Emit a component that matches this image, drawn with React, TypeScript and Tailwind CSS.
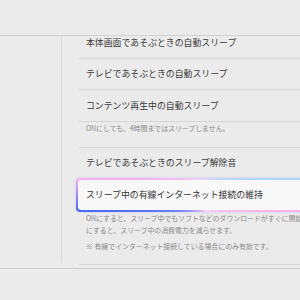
export default function App() {
  return (
    <div className="flex h-[300px] w-[300px] flex-col overflow-hidden bg-[#ebebeb] font-['Noto_Sans_CJK_JP','Noto_Sans',sans-serif] text-[#3a3a3a]">
      <header className="h-[36px] shrink-0 border-b border-[#d2d2d2]" />
      <div className="flex h-[232px] shrink-0">
        <aside className="mb-[5px] w-[62px] shrink-0 border-r border-[#dadada]" />
        <main className="flex-1 overflow-hidden pl-[17px]">
          <div className="w-[260px]">
            <div className="-mt-[9px] flex h-[32px] items-center border-b border-[#d6d6d6] pl-[7px] text-[8.9px]">
              本体画面であそぶときの自動スリープ
            </div>
            <div className="flex h-[31px] items-center border-b border-[#d6d6d6] pl-[7px] text-[8.9px]">
              テレビであそぶときの自動スリープ
            </div>
            <div className="flex h-[32px] items-center border-b border-[#d6d6d6] pl-[7px] text-[8.9px]">
              コンテンツ再生中の自動スリープ
            </div>
            <div className="h-[26px] border-b border-[#d6d6d6] pl-[7px] pt-[1px] text-[6.9px] leading-[10px] text-[#8a8a8a]">
              ONにしても、4時間まではスリープしません。
            </div>
            <div className="flex h-[30px] items-center pl-[7px] text-[8.9px]">
              テレビであそぶときのスリープ解除音
            </div>
            <div className="-ml-[3px] h-[34px] w-[260px] rounded-[4px] bg-[conic-gradient(from_0deg,#dcd6ff_0deg,#a9d6ff_83deg,#f3b2ee_97deg,#f6d2f2_180deg,#4a68f2_263deg,#f2aef0_277deg,#f2cdf4_320deg,#dcd6ff_360deg)] p-[2px] shadow-[0_0_3px_rgba(160,150,255,0.35)]">
              <div className="flex h-full items-center rounded-[3px] bg-[#f8f8f8] pl-[8px] text-[8.9px] text-[#333]">
                スリープ中の有線インターネット接続の維持
              </div>
            </div>
            <div className="whitespace-nowrap border-b border-[#d6d6d6] pb-[12px] pl-[7px] text-[6.9px] leading-[12px] text-[#8a8a8a]">
              <p>ONにすると、スリープ中でもソフトなどのダウンロードがすぐに開始されます。OFF</p>
              <p>にすると、スリープ中の消費電力を減らせます。</p>
              <p className="mt-[4px]">※ 有線でインターネット接続している場合にのみ有効です。</p>
            </div>
          </div>
        </main>
      </div>
      <div className="border-t border-[#d0d0d0]" />
    </div>
  );
}
